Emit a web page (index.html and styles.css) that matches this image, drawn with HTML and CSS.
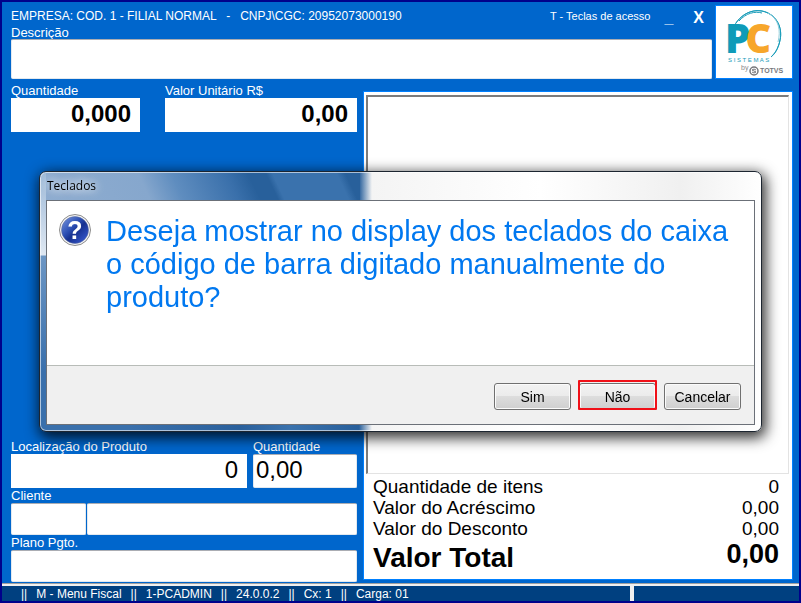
FILE: index.html
```html
<!DOCTYPE html>
<html lang="pt-BR">
<head>
    <meta charset="UTF-8">
    <meta name="viewport" content="width=device-width, initial-scale=1.0">
    <title>Teclados</title>
    <link rel="stylesheet" href="styles.css">
</head>
<body>
    <main class="pos">
        <header class="top">
            <div class="top-main">
                <div class="top-bar">
                    <span class="company">EMPRESA: COD. 1 - FILIAL NORMAL   -   CNPJ\CGC: 20952073000190</span>
                    <span class="hint">T - Teclas de acesso</span>
                    <button class="window-btn" type="button">_</button>
                    <button class="window-btn" type="button">X</button>
                </div>
                <div class="field">
                    <label for="descricao">Descrição</label>
                    <input class="sunken tall" id="descricao" type="text">
                </div>
            </div>
            <div class="logo">
                <svg viewBox="0 0 76 72" role="img" aria-label="PC Sistemas by Totvs">
                    <g fill="none" stroke="#1a9dba" stroke-width="1">
                        <path d="M18 20 C25 8 36 3 46 5 C60 8 67 21 64 34 C63 41 60 46 56 50"/>
                        <path d="M20 17 C28 5 42 2 52 7 C64 13 67 27 63 38 C61 44 59 48 55 51"/>
                        <path d="M23 15 C30 7 39 5 46 7"/>
                        <path d="M52 7 C63 13 65 25 62 36" stroke="#8fcddb"/>
                    </g>
                    <text class="logo-name" x="9" y="47">P<tspan class="logo-c" dx="-5">C</tspan></text>
                    <text class="logo-sub" x="12" y="56">S I S T E M A S</text>
                    <text class="logo-by" x="25" y="64">by</text>
                    <circle cx="38" cy="65" r="4" fill="none" stroke="#77787b" stroke-width="1.5"/>
                    <path d="M36 64 q2 -2 4 0 M36 66 q2 2 4 0 M36 64 l4 2" fill="none" stroke="#77787b"/>
                    <text class="logo-totvs" x="44" y="67">TOTVS</text>
                </svg>
            </div>
        </header>

        <section class="middle">
            <div class="side">
                <div class="row amounts">
                    <div class="field">
                        <label for="qtd">Quantidade</label>
                        <input class="amount bold" id="qtd" type="text" value="0,000">
                    </div>
                    <div class="field">
                        <label for="unitario">Valor Unitário R$</label>
                        <input class="amount bold" id="unitario" type="text" value="0,00">
                    </div>
                </div>

                <div class="side-bottom">
                    <div class="row location">
                        <div class="field">
                            <label for="local">Localização do Produto</label>
                            <input class="amount" id="local" type="text" value="0">
                        </div>
                        <div class="field">
                            <label for="local-qtd">Quantidade</label>
                            <input class="amount start sunken" id="local-qtd" type="text" value="0,00">
                        </div>
                    </div>
                    <div class="field">
                        <label for="cliente">Cliente</label>
                        <div class="row client">
                            <input class="sunken" id="cliente" type="text">
                            <input class="sunken" type="text" aria-label="Nome do cliente">
                        </div>
                    </div>
                    <div class="field">
                        <label for="plano">Plano Pgto.</label>
                        <input class="sunken" id="plano" type="text">
                    </div>
                </div>
            </div>

            <div class="receipt">
                <div class="items"></div>
                <dl class="totals">
                    <div><dt>Quantidade de itens</dt><dd>0</dd></div>
                    <div><dt>Valor do Acréscimo</dt><dd>0,00</dd></div>
                    <div><dt>Valor do Desconto</dt><dd>0,00</dd></div>
                    <div class="grand"><dt>Valor Total</dt><dd>0,00</dd></div>
                </dl>
            </div>
        </section>

        <footer class="status">
            <div class="status-cell">
                <span>||</span>
                <span>M - Menu Fiscal</span>
                <span>||</span>
                <span>1-PCADMIN</span>
                <span>||</span>
                <span>24.0.0.2</span>
                <span>||</span>
                <span>Cx: 1</span>
                <span>||</span>
                <span>Carga: 01</span>
            </div>
            <div class="status-cell"></div>
        </footer>
    </main>

    <div class="dialog" role="dialog" aria-labelledby="dialog-title">
        <h1 class="dialog-title" id="dialog-title">Teclados</h1>
        <div class="dialog-box">
            <div class="dialog-body">
                <svg class="question" viewBox="0 0 32 32" aria-hidden="true">
                    <defs>
                        <linearGradient id="ball" x1="0" y1="0" x2="1" y2="1">
                            <stop offset="0" stop-color="#7d9be0"/>
                            <stop offset="0.4" stop-color="#2c4fb4"/>
                            <stop offset="0.55" stop-color="#16308f"/>
                            <stop offset="1" stop-color="#3f62dc"/>
                        </linearGradient>
                    </defs>
                    <circle cx="16" cy="16" r="15.5" fill="#f4f4f4" stroke="#8c8c8c"/>
                    <circle cx="16" cy="16" r="13.5" fill="url(#ball)" stroke="#5a6a9a" stroke-width="0.5"/>
                    <text x="16" y="25">?</text>
                </svg>
                <p class="message">Deseja mostrar no display dos teclados do caixa o código de barra digitado manualmente do produto?</p>
            </div>
            <div class="dialog-actions">
                <button class="btn" type="button">Sim</button>
                <button class="btn marked" type="button">Não</button>
                <button class="btn" type="button">Cancelar</button>
            </div>
        </div>
    </div>
</body>
</html>
```
FILE: styles.css
```css
* {
    margin: 0;
    padding: 0;
    box-sizing: border-box;
}

body {
    font-family: "Liberation Sans", Arial, sans-serif;
    font-size: 13px;
    color: #fff;
    background: #0066cc;
}

input,
button {
    font-family: inherit;
    border: none;
    border-radius: 0;
    min-width: 0;
}

.pos {
    display: flex;
    flex-direction: column;
    min-height: 100vh;
    border: 2px solid #00008b;
    background: #0066cc;
}

/* Header */
.top {
    display: flex;
    gap: 3px;
    padding: 3px 6px 0 9px;
}

.top-main {
    flex: 1;
}

.top-bar {
    display: flex;
    align-items: center;
    height: 21px;
    padding-right: 8px;
    font-size: 12px;
}

.company {
    flex: 1;
    white-space: pre;
}

.hint {
    margin-right: 14px;
    font-size: 11px;
    line-height: 19px;
    padding-top: 2px;
}

.window-btn {
    padding-top: 4px;
    background: none;
    color: #fff;
    font-size: 16px;
    font-weight: bold;
    line-height: 20px;
}

.window-btn + .window-btn {
    margin-left: 20px;
}

.logo {
    width: 78px;
    height: 74px;
    border: 1px solid #0080ff;
    background: #fff;
}

.logo svg {
    display: block;
}

.logo-name {
    font: 800 40px "Open Sans", sans-serif;
    fill: #0f9bb8;
}

.logo-c {
    fill: #f7a62b;
}

.logo-sub {
    font: 6px "Liberation Sans", sans-serif;
    fill: #1a9dba;
}

.logo-by {
    font: 7px "Liberation Sans", sans-serif;
    fill: #8a8a8a;
}

.logo-totvs {
    font: bold 7px "Liberation Sans", sans-serif;
    fill: #77787b;
}

/* Fields */
.field {
    display: flex;
    flex-direction: column;
}

.field label {
    height: 14px;
    line-height: 14px;
    white-space: nowrap;
}

.top .field label {
    height: 13px;
}

.field input {
    width: 100%;
    height: 32px;
    background: #fff;
    color: #000;
    font-size: 24px;
}

.field .sunken {
    border: 1px solid #e3e9ef;
    border-top-color: #abadb3;
    border-radius: 2px;
}

.field .tall {
    height: 40px;
}

.field .amount {
    height: 34px;
    padding: 0 9px 3px;
    text-align: right;
}

.field .start {
    padding: 0 2px 3px;
    text-align: left;
}

.field .bold {
    font-weight: bold;
}

/* Sale area */
.middle {
    flex: 1;
    display: grid;
    grid-template-columns: 346fr 430fr;
    gap: 6px;
    padding: 5px 6px 1px 9px;
}

.side {
    display: flex;
    flex-direction: column;
    justify-content: space-between;
}

.side-bottom {
    display: flex;
    flex-direction: column;
    gap: 1px;
}

.row {
    display: grid;
}

.amounts {
    grid-template-columns: 129fr 192fr;
    gap: 25px;
}

.location {
    grid-template-columns: 236fr 104fr;
    gap: 6px;
}

.client {
    grid-template-columns: 75fr 270fr;
    gap: 1px;
}

.receipt {
    display: flex;
    flex-direction: column;
    margin: 7px 0 2px;
    padding: 3px 3px 0 2px;
    border: 1px solid #0080ff;
    background: #fff;
    color: #000;
}

.items {
    flex: 1;
    border: 1px solid #e3e3e3;
    border-top: 2px solid #7c7c7c;
    border-left: 2px solid #7c7c7c;
}

.totals {
    padding: 2px 10px 2px 7px;
    font-size: 19px;
    line-height: 21px;
}

.totals div {
    display: flex;
    justify-content: space-between;
    align-items: flex-start;
}

.totals .grand {
    font-size: 28px;
    font-weight: bold;
    line-height: 38px;
}

.grand dd {
    font-size: 27px;
    line-height: 30px;
}

/* Status bar */
.status {
    display: grid;
    grid-template-columns: 628fr 165fr;
    gap: 4px;
    border-top: 1px solid #a0a0a0;
    background: #f0f0f0;
}

.status-cell {
    display: flex;
    gap: 9px;
    height: 15px;
    margin-top: 2px;
    padding-left: 19px;
    background: #004080;
    font-size: 12px;
    line-height: 17px;
    white-space: nowrap;
}

/* Dialog */
.dialog {
    position: fixed;
    inset: 0;
    width: 723px;
    max-width: 96vw;
    height: fit-content;
    margin: auto;
    padding: 0 6px 6px;
    border: 1px solid #1c2530;
    border-radius: 7px;
    background:
        linear-gradient(to bottom, #9db9d8 0, #dfe8f2 83px, #6c96c4 84px, #3a70ac 200px) 0 0 / 6px 100% no-repeat,
        linear-gradient(65deg, #8fadd0 0, #86a7cd 100px, #5f8dbf 130px, #3a70ab 180px, #28609b 200px, #28609b 216px, #3a72ad 222px, #3a72ad 280px, #28609b 288px, #28609b 100%) 0 0 / 320px 28px no-repeat,
        linear-gradient(to right, #3a70ac 0, #3a70ac 90px, #2a609c 200px, #3a72ad 250px, #285f9b 319px, #f4f4f4 332px, #fff 500px, #f0f0f0 640px, #fff 723px);
    box-shadow: inset 0 0 0 1px rgba(255, 255, 255, 0.6), 2px 4px 14px 2px rgba(0, 0, 0, 0.8);
    color: #000;
}

.dialog-title {
    height: 28px;
    padding-left: 1px;
    font: 12px/28px "Open Sans", sans-serif;
    text-shadow: 0 0 8px #fff, 0 0 12px #fff;
}

.dialog-box {
    border: 1px solid #6b7078;
}

.dialog-body {
    display: flex;
    align-items: flex-start;
    gap: 15px;
    min-height: 165px;
    padding: 13px 12px;
    border-bottom: 1px solid #b8bcb8;
    background: #fff;
}

.question {
    flex: none;
    width: 32px;
    height: 32px;
}

.question text {
    font: bold 25px "Liberation Sans", sans-serif;
    fill: #fff;
    text-anchor: middle;
}

.message {
    padding-top: 1px;
    font-size: 29px;
    line-height: 33px;
    color: #0078f0;
}

.dialog-actions {
    display: flex;
    justify-content: flex-end;
    gap: 8px;
    padding: 17px 13px 14px;
    background: #f0f0f0;
}

.btn {
    position: relative;
    width: 77px;
    height: 27px;
    border: 1px solid #707070;
    border-radius: 3px;
    background: linear-gradient(#f2f2f2 0, #ebebeb 50%, #dddddd 50%, #cfcfcf 100%);
    box-shadow: inset 0 0 0 1px #fbfbfb;
    font-size: 14px;
}

/* red frame around the highlighted option */
.marked::after {
    content: "";
    position: absolute;
    inset: -4px -2px -1px;
    border: 2px solid #f01018;
    border-radius: 1px;
}
```
